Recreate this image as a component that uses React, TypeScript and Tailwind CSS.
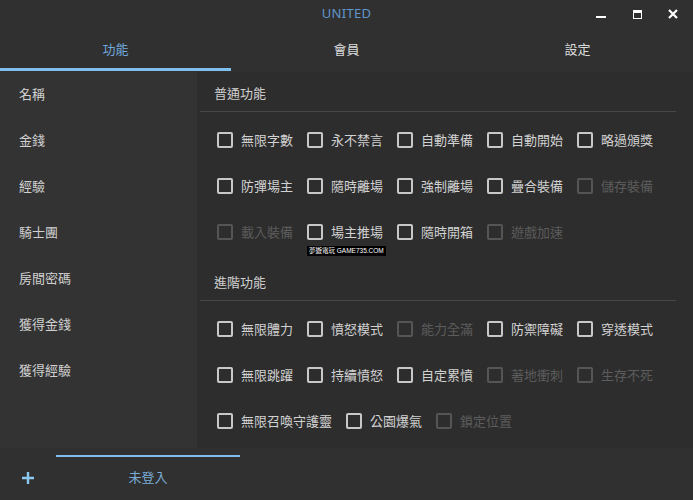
import React from "react";

type Item = { label: string; disabled?: boolean };

const basic: Item[][] = [
  [
    { label: "無限字數" },
    { label: "永不禁言" },
    { label: "自動準備" },
    { label: "自動開始" },
    { label: "略過頒獎" },
  ],
  [
    { label: "防彈場主" },
    { label: "隨時離場" },
    { label: "強制離場" },
    { label: "疊合裝備" },
    { label: "儲存裝備", disabled: true },
  ],
  [
    { label: "載入裝備", disabled: true },
    { label: "場主推場" },
    { label: "隨時開箱" },
    { label: "遊戲加速", disabled: true },
  ],
];

const advanced: Item[][] = [
  [
    { label: "無限體力" },
    { label: "憤怒模式" },
    { label: "能力全滿", disabled: true },
    { label: "防禦障礙" },
    { label: "穿透模式" },
  ],
  [
    { label: "無限跳躍" },
    { label: "持續憤怒" },
    { label: "自定累憤" },
    { label: "著地衝刺", disabled: true },
    { label: "生存不死", disabled: true },
  ],
  [
    { label: "無限召喚守護靈" },
    { label: "公園爆氣" },
    { label: "鎖定位置", disabled: true },
  ],
];

const sideItems = ["名稱", "金錢", "經驗", "騎士團", "房間密碼", "獲得金錢", "獲得經驗"];

function Check({ item }: { item: Item }) {
  return (
    <div className="flex items-center gap-[8px]">
      <div
        className={
          item.disabled
            ? "w-[16px] h-[16px] rounded-[2px] border-2 border-[#555555]"
            : "w-[16px] h-[16px] rounded-[2px] border-2 border-[#c8c8c8]"
        }
      />
      <span
        className={
          item.disabled
            ? "text-[13px] leading-[16px] text-[#5c5c5c] -mt-[1px]"
            : "text-[13px] leading-[16px] text-[#d2d2d2] -mt-[1px]"
        }
      >
        {item.label}
      </span>
    </div>
  );
}

function Section({ title, rows, headH }: { title: string; rows: Item[][]; headH: string }) {
  return (
    <div>
      <div className={`${headH} flex items-end pb-[10px] pl-[17px] text-[13px] leading-[16px] text-[#cfcfcf]`}>
        {title}
      </div>
      <div className="h-px bg-[#474747] ml-[3px] mr-[17px]" />
      <div className="pt-[5px] pl-[20px]">
        {rows.map((r, i) => (
          <div key={i} className="h-[46px] flex items-center gap-[14px]">
            {r.map((it) => (
              <Check key={it.label} item={it} />
            ))}
          </div>
        ))}
      </div>
    </div>
  );
}

export default function App() {
  return (
    <div
      className="w-[693px] h-[500px] bg-[#303030] flex flex-col overflow-hidden"
      style={{ fontFamily: '"Noto Sans CJK TC", "Noto Sans", sans-serif' }}
    >
      {/* Title bar */}
      <div className="h-[28px] relative flex items-center justify-center">
        <span
          className="text-[13px] text-[#6096cb] tracking-[0.3px]"
          style={{ fontFamily: '"Noto Sans", "Open Sans", sans-serif' }}
        >
          UNITED
        </span>
        <div className="absolute right-0 top-0 h-[28px] flex items-center">
          <div className="w-[36px] h-[28px] flex items-center justify-center">
            <div className="w-[10px] h-[2px] bg-white mt-[5px]" />
          </div>
          <div className="w-[36px] h-[28px] flex items-center justify-center">
            <div className="w-[9px] h-[9px] border border-white border-t-[3px] bg-[#303030]" />
          </div>
          <div className="w-[36px] h-[28px] flex items-center justify-center mr-[2px]">
            <svg width="10" height="10" viewBox="0 0 10 10">
              <path d="M1 1 L9 9 M9 1 L1 9" stroke="white" strokeWidth="2.2" />
            </svg>
          </div>
        </div>
      </div>

      {/* Tabs */}
      <div className="h-[44px] grid grid-cols-3">
        <div className="relative flex items-center justify-center pb-[2px] text-[13px] text-[#6fa8dc]">
          功能
          <div className="absolute left-0 right-0 bottom-[1px] h-[3px] bg-[#7fc0ee]" />
        </div>
        <div className="flex items-center justify-center pb-[2px] text-[13px] text-[#dcdcdc]">會員</div>
        <div className="flex items-center justify-center pb-[2px] text-[13px] text-[#dcdcdc]">設定</div>
      </div>

      {/* Middle */}
      <div className="h-[376px] flex">
        <div className="w-[197px] bg-[#333333]">
          {sideItems.map((s) => (
            <div key={s} className="h-[46px] flex items-center pl-[19px] pb-[3px] text-[13px] text-[#d0d0d0]">
              {s}
            </div>
          ))}
        </div>
        <div className="flex-1 bg-[#2d2d2d] relative">
          <Section title="普通功能" rows={basic} headH="h-[39px]" />
          <Section title="進階功能" rows={advanced} headH="h-[45px]" />
          <div
            className="absolute left-[110px] top-[174px] bg-black text-white text-[6.5px] leading-[10px] px-[2px]"
            style={{ fontFamily: '"Liberation Sans", "Noto Sans CJK TC", sans-serif' }}
          >
            夢遊電玩 GAME735.COM
          </div>
        </div>
      </div>

      {/* Bottom */}
      <div className="flex-1 flex">
        <div className="w-[56px] flex items-center justify-center pt-[8px]">
          <svg width="12" height="12" viewBox="0 0 12 12">
            <path d="M6 0 V12 M0 6 H12" stroke="#8cc8f0" strokeWidth="2.4" />
          </svg>
        </div>
        <div className="w-[184px] relative flex items-center justify-center pt-[6px] text-[13px] text-[#7aaed8]">
          未登入
          <div className="absolute left-0 right-0 top-[7px] h-[2px] bg-[#7fc0ee]" />
        </div>
      </div>
    </div>
  );
}
